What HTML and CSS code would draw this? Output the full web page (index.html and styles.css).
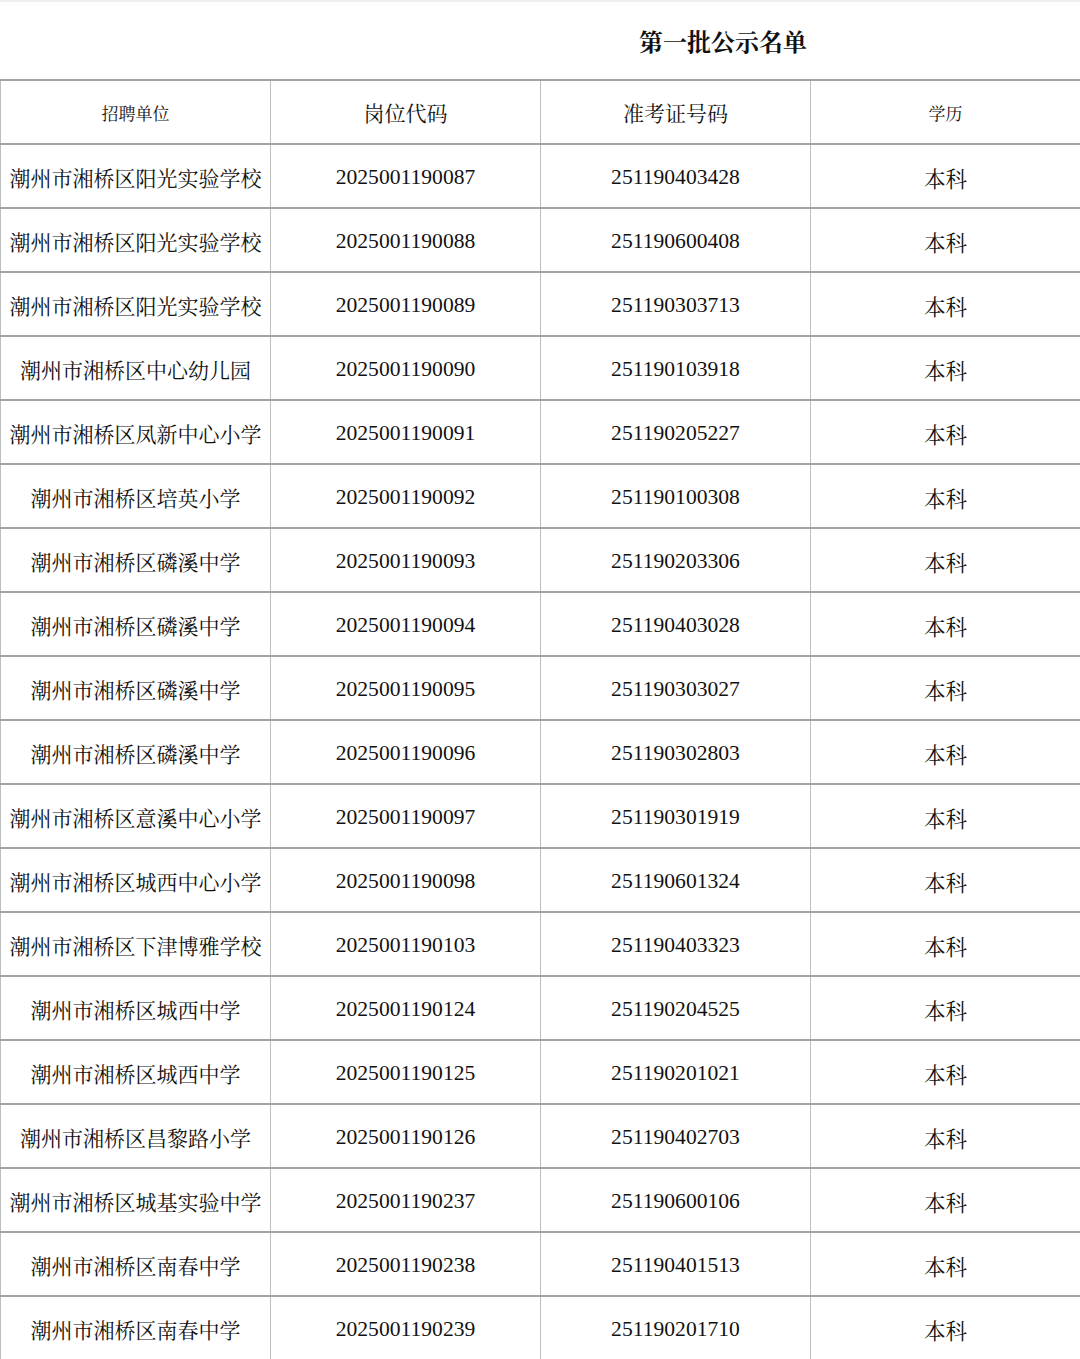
FILE: index.html
```html
<!DOCTYPE html>
<html lang="zh-CN">
<head>
<meta charset="utf-8">
<title>第一批公示名单</title>
<link rel="stylesheet" href="styles.css">
</head>
<body>
<div class="topbar"></div>
<div class="title-row"><h1 class="title">第一批公示名单</h1></div>
<table class="list">
<colgroup><col class="c"><col class="c"><col class="c"><col class="c"></colgroup>
<thead>
<tr><th class="small">招聘单位</th><th>岗位代码</th><th>准考证号码</th><th class="small">学历</th></tr>
</thead>
<tbody>
<tr><td>潮州市湘桥区阳光实验学校</td><td>2025001190087</td><td>251190403428</td><td>本科</td></tr>
<tr><td>潮州市湘桥区阳光实验学校</td><td>2025001190088</td><td>251190600408</td><td>本科</td></tr>
<tr><td>潮州市湘桥区阳光实验学校</td><td>2025001190089</td><td>251190303713</td><td>本科</td></tr>
<tr><td>潮州市湘桥区中心幼儿园</td><td>2025001190090</td><td>251190103918</td><td>本科</td></tr>
<tr><td>潮州市湘桥区凤新中心小学</td><td>2025001190091</td><td>251190205227</td><td>本科</td></tr>
<tr><td>潮州市湘桥区培英小学</td><td>2025001190092</td><td>251190100308</td><td>本科</td></tr>
<tr><td>潮州市湘桥区磷溪中学</td><td>2025001190093</td><td>251190203306</td><td>本科</td></tr>
<tr><td>潮州市湘桥区磷溪中学</td><td>2025001190094</td><td>251190403028</td><td>本科</td></tr>
<tr><td>潮州市湘桥区磷溪中学</td><td>2025001190095</td><td>251190303027</td><td>本科</td></tr>
<tr><td>潮州市湘桥区磷溪中学</td><td>2025001190096</td><td>251190302803</td><td>本科</td></tr>
<tr><td>潮州市湘桥区意溪中心小学</td><td>2025001190097</td><td>251190301919</td><td>本科</td></tr>
<tr><td>潮州市湘桥区城西中心小学</td><td>2025001190098</td><td>251190601324</td><td>本科</td></tr>
<tr><td>潮州市湘桥区下津博雅学校</td><td>2025001190103</td><td>251190403323</td><td>本科</td></tr>
<tr><td>潮州市湘桥区城西中学</td><td>2025001190124</td><td>251190204525</td><td>本科</td></tr>
<tr><td>潮州市湘桥区城西中学</td><td>2025001190125</td><td>251190201021</td><td>本科</td></tr>
<tr><td>潮州市湘桥区昌黎路小学</td><td>2025001190126</td><td>251190402703</td><td>本科</td></tr>
<tr><td>潮州市湘桥区城基实验中学</td><td>2025001190237</td><td>251190600106</td><td>本科</td></tr>
<tr><td>潮州市湘桥区南春中学</td><td>2025001190238</td><td>251190401513</td><td>本科</td></tr>
<tr><td>潮州市湘桥区南春中学</td><td>2025001190239</td><td>251190201710</td><td>本科</td></tr>
</tbody>
</table>
</body>
</html>
```
FILE: styles.css
```css
html, body {
  margin: 0;
  padding: 0;
  background: #ffffff;
}
body {
  font-family: "Liberation Serif", "Noto Serif CJK SC", "Noto Sans CJK SC", serif;
  color: #111111;
  width: 1080px;
  overflow: hidden;
}
.topbar {
  height: 2px;
  background: #efefef;
}
.title-row {
  height: 77px;
  display: flex;
  align-items: center;
  justify-content: center;
  padding-left: 366px;
  box-sizing: border-box;
}
.title {
  margin: 0;
  font-size: 24px;
  font-weight: 700;
  font-family: "Noto Serif CJK SC", "Noto Sans CJK SC", serif;
  letter-spacing: 0;
  padding-bottom: 1px;
}
.list {
  border-collapse: collapse;
  table-layout: fixed;
  width: 1080px;
}
.list .c {
  width: 270px;
}
.list th, .list td {
  height: 62px;
  padding: 0;
  text-align: center;
  vertical-align: middle;
  font-size: 21.6px;
  font-weight: 400;
  border-top: 2px solid #a3a3a3;
  border-bottom: 2px solid #a3a3a3;
  border-left: 1px solid #bdbdbd;
  border-right: 1px solid #bdbdbd;
  white-space: nowrap;
}
.list td {
  height: 60px;
  padding-top: 2px;
}
.list th {
  font-size: 21px;
}
.list th.small {
  font-size: 17px;
}
.list td:first-child {
  font-family: "Noto Serif CJK SC", "Noto Sans CJK SC", serif;
  font-size: 21px;
}
```
